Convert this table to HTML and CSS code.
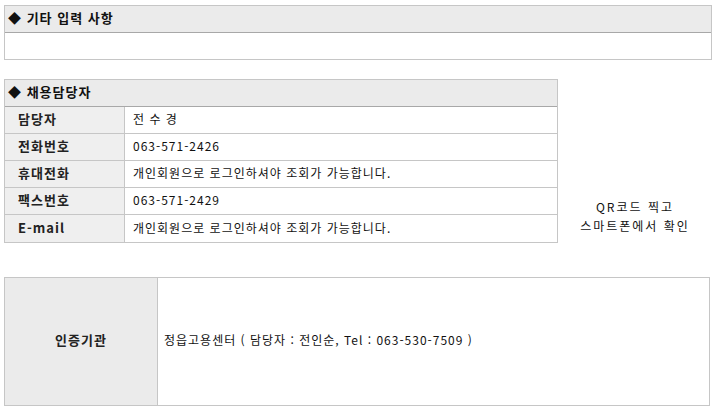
FILE: index.html
```html
<!DOCTYPE html>
<html lang="ko">
<head>
<meta charset="utf-8">
<link rel="stylesheet" href="styles.css">
</head>
<body>
<div class="page">
  <div class="box etc">
    <div class="sec-head">◆ 기타 입력 사항</div>
    <div class="sec-body"></div>
  </div>

  <div class="contact">
    <div class="box contact-table">
      <div class="sec-head">◆ 채용담당자</div>
      <div class="row"><div class="label">담당자</div><div class="value">전 수 경</div></div>
      <div class="row"><div class="label">전화번호</div><div class="value">063-571-2426</div></div>
      <div class="row"><div class="label">휴대전화</div><div class="value">개인회원으로 로그인하셔야 조회가 가능합니다.</div></div>
      <div class="row"><div class="label">팩스번호</div><div class="value">063-571-2429</div></div>
      <div class="row"><div class="label">E-mail</div><div class="value">개인회원으로 로그인하셔야 조회가 가능합니다.</div></div>
    </div>
    <div class="qr">
      <div class="qr-text">QR코드 찍고<br>스마트폰에서 확인</div>
    </div>
  </div>

  <div class="box cert">
    <div class="cert-label">인증기관</div>
    <div class="cert-value">정읍고용센터 ( 담당자 : 전인순, Tel : 063-530-7509 )</div>
  </div>
</div>
</body>
</html>
```
FILE: styles.css
```css
* { box-sizing: border-box; }
html, body { margin: 0; padding: 0; background: #fff; }
body {
  font-family: "Noto Sans CJK KR", "Noto Sans", sans-serif;
  font-size: 12px;
  color: #111;
}
.page {
  padding: 5px 0 0 4px;
  width: 712px;
}
.box {
  border: 1px solid #c6c6c6;
  background: #fff;
}
.sec-head {
  height: 27px;
  background: #ebebeb;
  border-bottom: 1px solid #a8a8a8;
  font-weight: bold;
  font-size: 13px;
  letter-spacing: 1px;
  padding: 0 0 3px 3px;
  display: flex;
  align-items: center;
  color: #111;
}
.etc { width: 708px; }
.etc .sec-body { height: 26px; }

.contact {
  margin-top: 19px;
  display: flex;
  width: 708px;
}
.contact-table { width: 554px; }
.row {
  display: flex;
  height: 27px;
  border-bottom: 1px solid #c6c6c6;
}
.row:last-child { border-bottom: none; }
.label {
  width: 120px;
  background: #efefef;
  border-right: 1px solid #c6c6c6;
  font-weight: bold;
  font-size: 13px;
  letter-spacing: 1px;
  padding: 0 0 3px 13px;
  display: flex;
  align-items: center;
  color: #222;
}
.value {
  flex: 1;
  padding: 0 0 3px 8px;
  letter-spacing: 1px;
  display: flex;
  align-items: center;
  color: #111;
}
.qr {
  flex: 1;
  display: flex;
  justify-content: center;
  align-items: flex-end;
  padding-bottom: 8px;
}
.qr-text {
  text-align: center;
  line-height: 19px;
  letter-spacing: 2px;
  font-size: 12px;
  color: #111;
}

.cert {
  margin-top: 34px;
  width: 706px;
  height: 129px;
  display: flex;
}
.cert-label {
  width: 153px;
  background: #ebebeb;
  border-right: 1px solid #c6c6c6;
  font-weight: bold;
  font-size: 13px;
  letter-spacing: 1px;
  padding-bottom: 5px;
  display: flex;
  align-items: center;
  justify-content: center;
  color: #222;
}
.cert-value {
  flex: 1;
  padding: 0 0 5px 6px;
  letter-spacing: 1px;
  display: flex;
  align-items: center;
  color: #111;
}
```
